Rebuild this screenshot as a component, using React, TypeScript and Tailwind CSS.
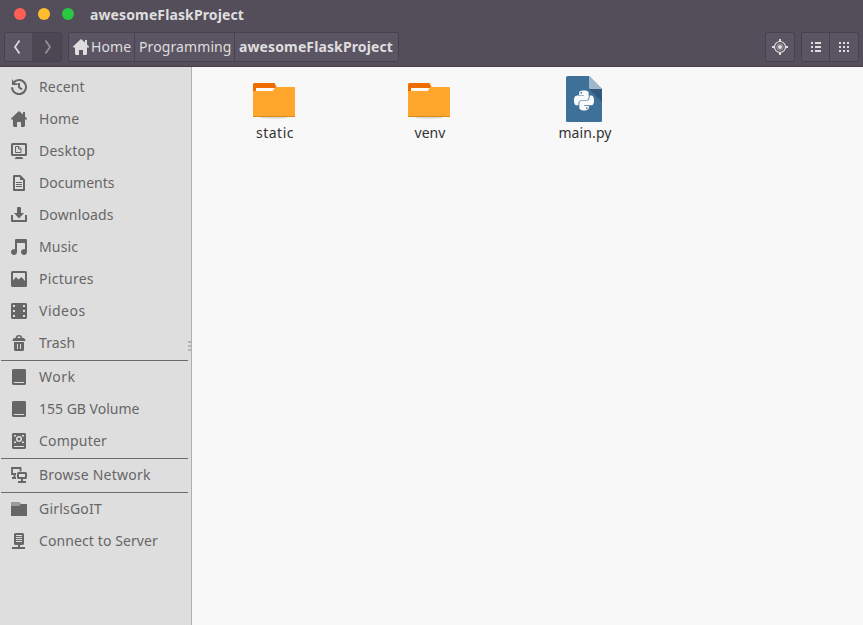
import type { ReactNode } from "react";
import { FaPython } from "react-icons/fa";

const ink = "#666666";

function Glyph({ children }: { children: ReactNode }) {
  return (
    <svg width="16" height="16" viewBox="0 0 16 16" fill={ink} className="shrink-0">
      {children}
    </svg>
  );
}

const homePath = "M8 0 L0 7.5 V8.5 H2 V15 L3 16 H6 V11 H10 V16 H13 L14 15 V8.5 H16 V7.5 L14 5.5 V1 H12 V3.6 Z";

const icons: Record<string, ReactNode> = {
  recent: (
    <Glyph>
      <path d="M2.6 3.6 A7 7 0 1 1 1 8.2" fill="none" stroke={ink} strokeWidth="2" />
      <path d="M1 0 V6 H6.5 V4.2 H4 Z" />
      <path d="M8 4 V8.3 L11 10.3" fill="none" stroke={ink} strokeWidth="2" />
    </Glyph>
  ),
  home: (
    <Glyph>
      <path d={homePath} />
    </Glyph>
  ),
  desktop: (
    <Glyph>
      <path fillRule="evenodd" d="M1.5 0 H14.5 Q16 0 16 1.5 V11.5 Q16 13 14.5 13 H1.5 Q0 13 0 11.5 V1.5 Q0 0 1.5 0 Z M2 2 V11 H14 V2 Z" />
      <path d="M5 14 H11 L12.5 16 H3.5 Z" />
      <path d="M4.5 3.5 H8 L10 5.5 V9.5 H4.5 Z M7.5 3.5 V6 H10" fill="none" stroke={ink} />
    </Glyph>
  ),
  documents: (
    <Glyph>
      <path d="M3 1 H9 L13 5 V15 H3 Z" fill="none" stroke={ink} strokeWidth="2" strokeLinejoin="round" />
      <path d="M9 1 V5 H13 Z M5 7 H11 V8 H5 Z M5 9 H11 V10 H5 Z M5 11 H11 V12 H5 Z" />
    </Glyph>
  ),
  downloads: (
    <Glyph>
      <path d="M0 8 H2 V13 H14 V8 H16 V14 Q16 15 15 15 H1 Q0 15 0 14 Z" />
      <path d="M6 1 Q6 0 7 0 H9 Q10 0 10 1 V6 H13 L8 11.5 L3 6 H6 Z" />
    </Glyph>
  ),
  music: (
    <Glyph>
      <path d="M5 0 H15 Q16 0 16 1 V13 A3 3 0 1 1 14 10.2 V4 H6 V13 A3 3 0 1 1 4 10.2 V1 Q4 0 5 0 Z" />
    </Glyph>
  ),
  pictures: (
    <Glyph>
      <path fillRule="evenodd" d="M1.5 0 H14.5 Q16 0 16 1.5 V14.5 Q16 16 14.5 16 H1.5 Q0 16 0 14.5 V1.5 Q0 0 1.5 0 Z M2 2 V9.5 L5 6 L7.5 8.5 L10.5 6 L14 10 V2 Z" />
    </Glyph>
  ),
  videos: (
    <Glyph>
      <path fillRule="evenodd" d="M1 0 H15 L16 1 V15 L15 16 H1 L0 15 V1 Z M2 2 V4 H4 V2 Z M2 7 V9 H4 V7 Z M2 12 V14 H4 V12 Z M12 2 V4 H14 V2 Z M12 7 V9 H14 V7 Z M12 12 V14 H14 V12 Z" />
    </Glyph>
  ),
  trash: (
    <Glyph>
      <path d="M5.500 3 Q5.500 .8 8 .8 Q10.500 .8 10.500 3" fill="none" stroke={ink} strokeWidth="1.6" />
      <path d="M3 3 H13 L14.5 5 V6 H1.5 V5 Z" />
      <path fillRule="evenodd" d="M3 7 H13 V14.5 Q13 16 11.5 16 H4.5 Q3 16 3 14.5 Z M6 9 V14 H7 V9 Z M9 9 V14 H10 V9 Z" />
    </Glyph>
  ),
  drive: (
    <Glyph>
      <path fillRule="evenodd" d="M2 0 H14 L15 1 V15 L14 16 H2 L1 15 V1 Z M3 13 V14 H13 V13 Z" />
    </Glyph>
  ),
  computer: (
    <Glyph>
      <path fillRule="evenodd" d="M2 0 H14 L15 1 V15 L14 16 H2 L1 15 V1 Z M3 13 V14 H13 V13 Z" />
      <circle cx="8" cy="6" r="2.3" fill="none" stroke="#dedede" strokeWidth="1.5" />
      <path d="M3 2h2v1.500h-2z M11 2h2v1.500h-2z M3 8.500h2v1.500h-2z M11 8.500h2v1.500h-2z" fill="#dedede" />
    </Glyph>
  ),
  network: (
    <Glyph>
      <path d="M9.5 4.5 V1 H1 V7 H5 M3.5 7 V11 H5" fill="none" stroke={ink} strokeWidth="1.8" />
      <path d="M1 10 H5 V12 H1 Z" />
      <rect x="7" y="6" width="8" height="5" rx=".5" fill="none" stroke={ink} strokeWidth="2" />
      <path d="M10 12 H12 V14 H15 V16 H7 V14 H10 Z" />
    </Glyph>
  ),
  folder: (
    <Glyph>
      <path d="M0 1 H8.500 L10 2.500 V5 H0 Z" fill="#9b9b9b" />
      <path d="M0 5 H8 L10 3 H16 V15 H0 Z" />
    </Glyph>
  ),
  server: (
    <Glyph>
      <path fillRule="evenodd" d="M4.5 0 H11.5 Q13 0 13 1.5 V10.5 Q13 12 11.5 12 H4.5 Q3 12 3 10.5 V1.5 Q3 0 4.5 0 Z M5 2 V3 H11 V2 Z M5 4 V5 H11 V4 Z M5 6 V7 H11 V6 Z M5 8 V9 H11 V8 Z" />
      <path d="M7 12 H9 V14 H14 V16 H1 V14 H7 Z" />
    </Glyph>
  ),
};

type Place = { label: string; icon: string; tracking: string };

const groups: Place[][] = [
  [
    { label: "Recent", icon: "recent", tracking: "tracking-[0.15px]" },
    { label: "Home", icon: "home", tracking: "tracking-[0.1px]" },
    { label: "Desktop", icon: "desktop", tracking: "tracking-[0.25px]" },
    { label: "Documents", icon: "documents", tracking: "tracking-normal" },
    { label: "Downloads", icon: "downloads", tracking: "tracking-[0.15px]" },
    { label: "Music", icon: "music", tracking: "tracking-[0.15px]" },
    { label: "Pictures", icon: "pictures", tracking: "tracking-[0.28px]" },
    { label: "Videos", icon: "videos", tracking: "tracking-[0.5px]" },
    { label: "Trash", icon: "trash", tracking: "tracking-[0.1px]" },
  ],
  [
    { label: "Work", icon: "drive", tracking: "tracking-[0.5px]" },
    { label: "155 GB Volume", icon: "drive", tracking: "tracking-normal" },
    { label: "Computer", icon: "computer", tracking: "tracking-[0.2px]" },
  ],
  [{ label: "Browse Network", icon: "network", tracking: "tracking-[0.24px]" }],
  [
    { label: "GirlsGoIT", icon: "folder", tracking: "tracking-[0.2px]" },
    { label: "Connect to Server", icon: "server", tracking: "tracking-[0.1px]" },
  ],
];

function Sidebar() {
  return (
    <aside className="relative w-48 shrink-0 border-r border-[#b0b0b0] bg-[#dedede] pt-1 text-[#666666]">
      {groups.map((group, i) => (
        <div key={i}>
          {i > 0 && <div className="ml-px mr-[3px] h-0.5 border-b border-[#6b6b6b]" />}
          {group.map((p) => (
            <div key={p.label} className="flex h-8 items-center gap-3 pl-[11px]">
              {icons[p.icon]}
              <span className={"whitespace-nowrap leading-5 " + p.tracking}>{p.label}</span>
            </div>
          ))}
        </div>
      ))}
      <div className="absolute right-0 top-[274px] flex w-[3px] flex-col gap-0.5">
        <i className="h-0.5 bg-[#b5b5b5]" />
        <i className="h-0.5 bg-[#b5b5b5]" />
        <i className="h-0.5 bg-[#b5b5b5]" />
      </div>
    </aside>
  );
}

const box = "flex h-[30px] overflow-hidden rounded-[2px] border border-[#464050] bg-[#5b5463]";

function Header() {
  return (
    <header className="h-[67px] shrink-0 border-b border-[#443e4c] bg-[#544e5b] text-[#dedede]">
      <div className="flex h-8 items-center pl-[13px] pb-1">
        <div className="flex gap-3">
          <span className="size-3 rounded-full bg-[#ff5f57] ml-px" />
          <span className="size-3 rounded-full bg-[#ffbd2e]" />
          <span className="size-3 rounded-full bg-[#28c940]" />
        </div>
        <span className="ml-4 font-bold tracking-[0.12px]">awesomeFlaskProject</span>
      </div>
      <div className="flex pl-1 pr-1">
        <div className={box + " w-[58px]"}>
          <div className="flex w-[27px] items-center pl-2">
            <svg width="8" height="14" viewBox="0 0 8 14" fill="none" stroke="#dedede" strokeWidth="1.7"><path d="M6.5 .5 L2 7 L6.5 13.5" /></svg>
          </div>
          <div className="flex flex-1 items-center bg-[#4d4754] pl-3">
            <svg width="8" height="14" viewBox="0 0 8 14" fill="none" stroke="#96919a" strokeWidth="1.7"><path d="M1.500 .5 L6 7 L1.500 13.500" /></svg>
          </div>
        </div>
        <div className={box + " ml-1.5 w-[331px]"}>
          <div className="flex w-[66px] shrink-0 items-center gap-0.5 border-r border-[#464050] pl-1">
            <svg width="16" height="16" viewBox="0 0 16 16" fill="#dedede" className="shrink-0"><path d={homePath} /></svg>
            <span className="pb-0.5 tracking-[0.1px]">Home</span>
          </div>
          <div className="flex w-[100px] shrink-0 items-center border-r border-[#464050] pb-0.5 pl-1">
            <span className="tracking-[0.1px]">Programming</span>
          </div>
          <div className="flex items-center pb-0.5 pl-1 font-bold">
            <span className="tracking-[0.12px]">awesomeFlaskProject</span>
          </div>
        </div>
        <div className={box + " ml-auto w-[30px] items-center justify-center"}>
          <svg width="16" height="16" viewBox="0 0 16 16" fill="none" stroke="#dedede">
            <circle cx="8" cy="8" r="5.5" strokeWidth="1.2" />
            <circle cx="8" cy="8" r="3.2" strokeOpacity=".55" />
            <circle cx="8" cy="8" r="2" fill="#dedede" stroke="none" />
            <path d="M8 0 V3 M8 13 V16 M0 8 H3 M13 8 H16" strokeWidth="2" />
          </svg>
        </div>
        <div className={box + " ml-1.5 w-[58px]"}>
          <div className="flex w-[28px] items-center justify-center border-r border-[#464050]">
            <svg width="10" height="10" viewBox="0 0 10 10" fill="#dedede" shapeRendering="crispEdges"><path d="M0 0h2v2H0zM4 0h6v2H4zM0 4h2v2H0zM4 4h6v2H4zM0 8h2v2H0zM4 8h6v2H4z" /></svg>
          </div>
          <div className="flex flex-1 items-center justify-center">
            <svg width="10" height="10" viewBox="0 0 10 10" fill="#dedede"><path d="M0 0h2v2H0zM4 0h2v2H4zM8 0h2v2H8zM0 4h2v2H0zM4 4h2v2H4zM8 4h2v2H8zM0 8h2v2H0zM4 8h2v2H4zM8 8h2v2H8z" /></svg>
          </div>
        </div>
      </div>
    </header>
  );
}

function FolderIcon() {
  return (
    <svg width="48" height="48" viewBox="0 0 48 48">
      <ellipse cx="24" cy="41.500" rx="14" ry="1.2" fill="#000" opacity=".13" />
      <path d="M3 8.500 Q3 7 4.500 7 H24.500 L26.500 11 V18 H3 Z" fill="#ee6c00" />
      <path d="M6 12 H26 V17 H6 Z" fill="#fffdf8" />
      <path d="M3 15 H22.500 L25.500 11 H44 Q45 11 45 12 V41 H3 Z" fill="#ffa62c" />
      <path d="M3 40 H45 V41 H3 Z" fill="#dc8a1c" />
    </svg>
  );
}

function PythonFileIcon() {
  return (
    <div className="relative size-12">
      <svg width="48" height="48" viewBox="0 0 48 48">
        <path d="M8 0 H29 L42 13 V44.500 Q42 46 40.500 46 H7.500 Q6 46 6 44.500 V1.500 Q6 0 8 0 Z" fill="#3f7098" />
        <path d="M29 13 H42 V26 Z" fill="#325a7c" />
        <path d="M29 0 L42 13 H30.500 Q29 13 29 11.500 Z" fill="#9fb8cb" />
      </svg>
      <FaPython className="absolute left-[13px] top-[13px] h-[23px] w-[22px] text-[#fafafa]" />
    </div>
  );
}

function FileItem({ label, tracking, children }: { label: string; tracking: string; children: ReactNode }) {
  return (
    <div className="flex w-[154px] flex-col items-center">
      {children}
      <span className={"ml-0.5 leading-[18px] text-[#333333] " + tracking}>{label}</span>
    </div>
  );
}

export default function App() {
  return (
    <div className="flex h-[625px] w-[863px] flex-col overflow-hidden bg-[#f8f8f8] font-['Noto_Sans',sans-serif] text-[14px]">
      <Header />
      <div className="flex min-h-0 flex-1">
        <Sidebar />
        <main className="flex flex-1 gap-px pl-[5px] pt-[9px]">
          <FileItem label="static" tracking="tracking-[0.5px]"><FolderIcon /></FileItem>
          <FileItem label="venv" tracking="tracking-normal"><FolderIcon /></FileItem>
          <FileItem label="main.py" tracking="tracking-[0.1px]"><PythonFileIcon /></FileItem>
        </main>
      </div>
    </div>
  );
}
